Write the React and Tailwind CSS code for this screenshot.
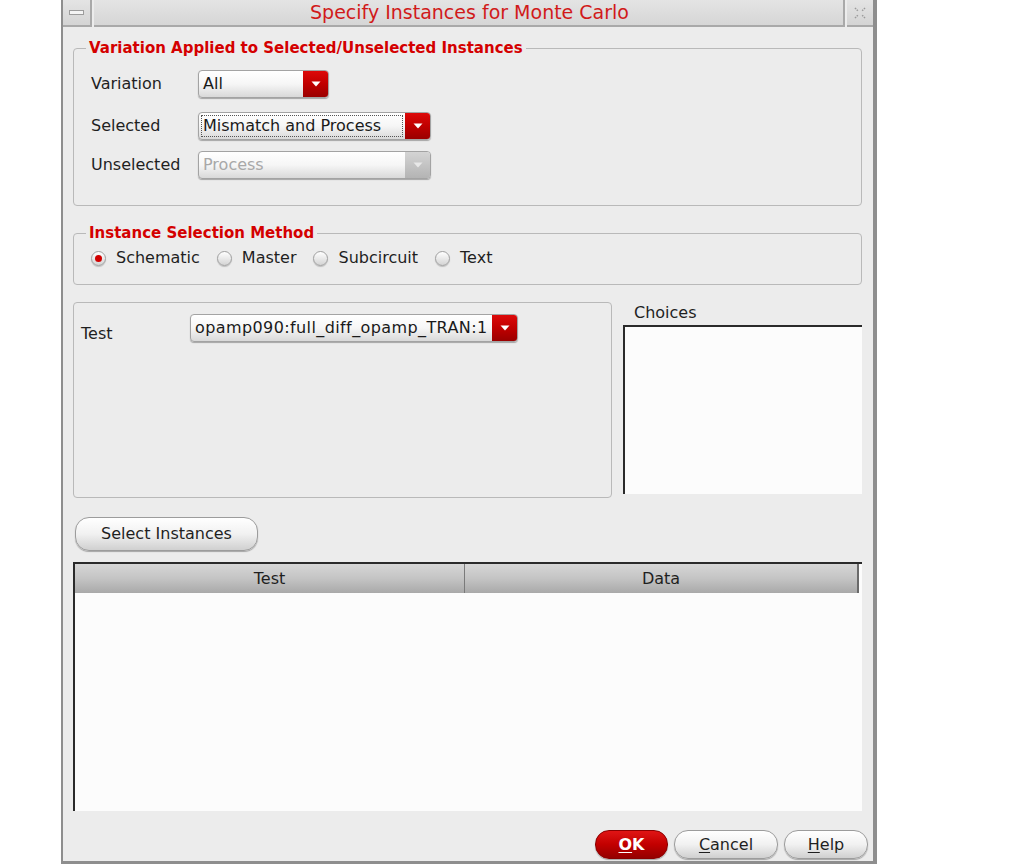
import React from 'react'

const ui = "font-['DejaVu_Sans',sans-serif]"

function Arrow({ dim }) {
  return (
    <svg width="10" height="6" viewBox="0 0 10 6">
      <path d="M0.5 0.5h9L5 5.5z" fill={dim ? '#e8e8e8' : '#ffffff'} />
    </svg>
  )
}

function Combo({ value, width, disabled, focused, textClass = '' }) {
  return (
    <div
      className={`flex h-[28px] ${width} overflow-hidden rounded-[4px] border border-[#a3a3a3] bg-gradient-to-b from-[#ffffff] via-[#f6f6f6] to-[#d9d9d9] shadow-[0_1px_1px_rgba(0,0,0,0.3)]`}
    >
      <div className="flex min-w-0 flex-1 items-center px-[2px] py-[2px]">
        <div
          className={`flex h-full w-full items-center whitespace-nowrap px-[1px] text-[16px] leading-none ${textClass} ${
            focused ? 'border border-dotted border-[#555]' : 'border border-transparent'
          } ${disabled ? 'text-[#a8a8a8]' : 'text-[#1a1a1a]'}`}
        >
          {value}
        </div>
      </div>
      <div
        className={`flex w-[25px] items-center justify-center ${
          disabled
            ? 'bg-gradient-to-b from-[#d4d4d4] to-[#b4b4b4]'
            : 'bg-gradient-to-b from-[#dd0a0a] via-[#c00000] to-[#9a0000]'
        }`}
      >
        <Arrow dim={disabled} />
      </div>
    </div>
  )
}

function Radio({ label, checked }) {
  return (
    <div className="flex items-center">
      <span className="flex h-[15px] w-[15px] items-center justify-center rounded-full border border-[#a0a0a0] bg-gradient-to-b from-[#ffffff] to-[#d4d4d4] shadow-[0_1px_1px_rgba(0,0,0,0.2)]">
        {checked && <span className="h-[7px] w-[7px] rounded-full bg-[#d10000]" />}
      </span>
      <span className="ml-[10px] text-[16px] leading-none text-[#1f1f1f]">{label}</span>
    </div>
  )
}

function PillButton({ children, className }) {
  return (
    <button
      type="button"
      className={`flex items-center justify-center rounded-[14px] border border-[#9c9c9c] bg-gradient-to-b from-[#ffffff] via-[#f1f1f1] to-[#d0d0d0] text-[16px] text-[#1f1f1f] shadow-[0_1px_1px_rgba(0,0,0,0.3)] ${className}`}
    >
      {children}
    </button>
  )
}

export default function App() {
  return (
    <div className={`${ui} h-[867px] w-[1011px] bg-white`}>
      <div className="ml-[61px] flex h-[864px] w-[816px] flex-col border-b-[3px] border-l-[2px] border-r-[4px] border-[#8e8e8e] bg-[#ececec]">
        {/* title bar */}
        <div className="flex h-[27px] shrink-0 gap-[2px] bg-[#ececec]">
          <div className="flex w-[29px] items-center justify-center border-b-[2px] border-r-[2px] border-[#a9a9a9] bg-gradient-to-b from-[#e4e4e4] to-[#d4d4d4]">
            <span className="h-[5px] w-[15px] border border-[#9c9c9c] bg-[#f4f4f4]" />
          </div>
          <div className="flex flex-1 items-center justify-center border-b-[2px] border-r-[2px] border-[#a9a9a9] bg-gradient-to-b from-[#e4e4e4] to-[#d6d6d6] pl-[2px]">
            <span className="text-[19px] leading-none text-[#d11a1a]">Specify Instances for Monte Carlo</span>
          </div>
          <div className="flex w-[26px] items-center justify-center border-b-[2px] border-[#a9a9a9] bg-gradient-to-b from-[#e4e4e4] to-[#d4d4d4]">
            <svg width="14" height="14" viewBox="0 0 14 14">
              <path
                d="M2 2l3 3M12 2l-3 3M2 12l3-3M12 12l-3-3"
                stroke="#9a9a9a"
                strokeWidth="1.5"
                strokeDasharray="1.5 1"
                fill="none"
              />
            </svg>
          </div>
        </div>

        {/* variation group */}
        <fieldset className="ml-[10px] mr-[11px] mt-[13px] rounded-[4px] border border-[#b9b9b9] px-[17px] pb-[26px] pt-[13px]">
          <legend className="ml-[-5px] px-[3px] text-[15px] font-bold leading-[17px] text-[#d40000]">
            Variation Applied to Selected/Unselected Instances
          </legend>
          <div className="flex flex-col">
            <div className="flex items-center">
              <span className="w-[107px] text-[16px] text-[#1f1f1f]">Variation</span>
              <Combo value="All" width="w-[131px]" />
            </div>
            <div className="mt-[14px] flex items-center">
              <span className="w-[107px] text-[16px] text-[#1f1f1f]">Selected</span>
              <Combo value="Mismatch and Process" width="w-[233px]" focused />
            </div>
            <div className="mt-[11px] flex items-center">
              <span className="w-[107px] text-[16px] text-[#1f1f1f]">Unselected</span>
              <Combo value="Process" width="w-[233px]" disabled />
            </div>
          </div>
        </fieldset>

        {/* instance selection method */}
        <fieldset className="ml-[10px] mr-[11px] mt-[19px] rounded-[4px] border border-[#b9b9b9] px-[17px] pb-[18px] pt-[8px]">
          <legend className="ml-[-5px] px-[3px] text-[15px] font-bold leading-[17px] text-[#d40000]">
            Instance Selection Method
          </legend>
          <div className="flex h-[16px] items-center gap-[17px]">
            <Radio label="Schematic" checked />
            <Radio label="Master" />
            <Radio label="Subcircuit" />
            <Radio label="Text" />
          </div>
        </fieldset>

        {/* test + choices */}
        <div className="ml-[10px] mr-[11px] mt-[17px] flex h-[196px] gap-[11px]">
          <div className="flex w-[539px] rounded-[4px] border border-[#b9b9b9] pl-[7px] pt-[11px]">
            <span className="mt-[8px] w-[109px] text-[16px] text-[#1f1f1f]">Test</span>
            <Combo value="opamp090:full_diff_opamp_TRAN:1" width="w-[328px]" textClass="tracking-[0.4px]" />
          </div>
          <div className="flex flex-1 flex-col">
            <span className="ml-[11px] h-[23px] pt-[2px] text-[16px] leading-[18px] text-[#1f1f1f]">Choices</span>
            <div className="h-[169px] border-l-[2px] border-t-[2px] border-[#2a2a2a] bg-[#fcfcfc]" />
          </div>
        </div>

        {/* select instances */}
        <div className="mt-[19px] pl-[12px]">
          <PillButton className="h-[34px] w-[183px]">Select Instances</PillButton>
        </div>

        {/* table */}
        <div className="ml-[10px] mr-[11px] mt-[11px] flex h-[249px] flex-col border-l-[2px] border-t-[2px] border-[#2a2a2a] bg-[#fcfcfc]">
          <div className="mr-[3px] flex h-[29px] border-r-[2px] border-[#6a6a6a] bg-gradient-to-b from-[#d6d6d6] via-[#c4c4c4] to-[#a9a9a9]">
            <div className="flex w-[390px] items-center justify-center border-r border-[#7a7a7a] text-[16px] text-[#1f1f1f]">
              Test
            </div>
            <div className="flex flex-1 items-center justify-center text-[16px] text-[#1f1f1f]">Data</div>
          </div>
          <div className="flex-1" />
        </div>

        {/* bottom buttons */}
        <div className="mt-[19px] flex justify-end gap-[6px] pr-[5px]">
          <button
            type="button"
            className="flex h-[29px] w-[73px] items-center justify-center rounded-[14px] border border-[#8a0000] bg-gradient-to-b from-[#e01414] via-[#c20000] to-[#950000] text-[16px] font-bold text-white shadow-[0_1px_1px_rgba(0,0,0,0.3)]"
          >
            <span className="underline underline-offset-2">O</span>K
          </button>
          <PillButton className="h-[29px] w-[104px]">
            <span className="underline underline-offset-2">C</span>ancel
          </PillButton>
          <PillButton className="h-[29px] w-[84px]">
            <span className="underline underline-offset-2">H</span>elp
          </PillButton>
        </div>
      </div>
    </div>
  )
}
